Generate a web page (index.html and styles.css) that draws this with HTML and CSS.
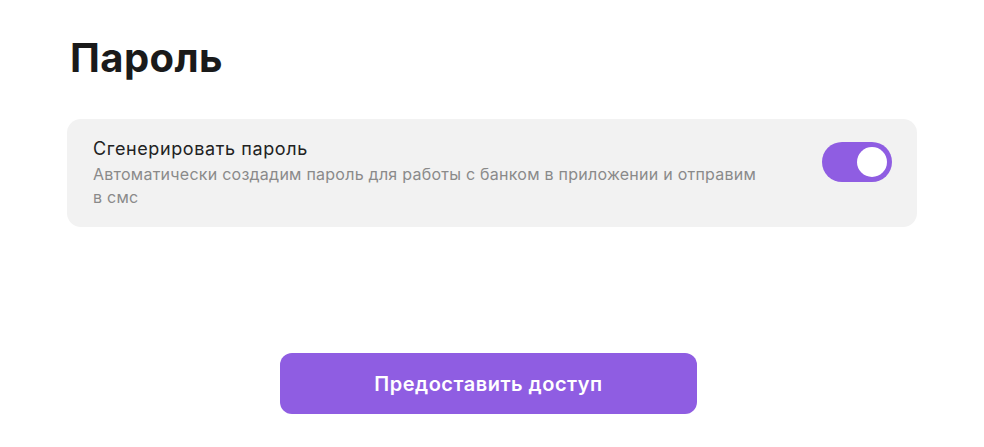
FILE: index.html
```html
<!DOCTYPE html>
<html lang="ru">
<head>
<meta charset="utf-8">
<link rel="stylesheet" href="styles.css">
</head>
<body>
<main class="page">
  <h1 class="title">Пароль</h1>
  <section class="card">
    <div class="card-text">
      <div class="card-label">Сгенерировать пароль</div>
      <div class="card-desc">Автоматически создадим пароль для работы с банком в приложении и отправим в смс</div>
    </div>
    <div class="toggle" role="switch" aria-checked="true"><span class="knob"></span></div>
  </section>
  <div class="actions">
    <button class="btn">Предоставить доступ</button>
  </div>
</main>
</body>
</html>
```
FILE: styles.css
```css
* { box-sizing: border-box; }
html, body { margin: 0; background: #fff; }
body { font-family: Inter, "Noto Sans", sans-serif; color: #1f1f1f; }
.page { padding: 0 67px; width: 984px; }
.title {
  margin: 0;
  padding: 33px 0 0 3px;
  font-size: 40px;
  line-height: 50px;
  font-weight: 700;
  color: #1a1a1a;
  letter-spacing: 0.4px;
}
.card {
  margin-top: 36px;
  height: 108px;
  background: #f2f2f2;
  border-radius: 14px;
  display: flex;
  align-items: flex-start;
  justify-content: space-between;
  padding: 18px 25px 0 26px;
}
.card-text { width: 672px; }
.card-label { font-size: 18px; line-height: 24px; color: #222; letter-spacing: 0.6px; }
.card-desc { font-size: 16px; line-height: 23px; color: #8a8a8a; margin-top: 2px; letter-spacing: 0.25px; }
.toggle {
  margin-top: 5px;
  width: 70px;
  height: 40px;
  border-radius: 20px;
  background: #8f5de2;
  display: flex;
  align-items: center;
  justify-content: flex-end;
  padding-right: 5px;
}
.knob { width: 30px; height: 30px; border-radius: 50%; background: #fff; }
.actions { display: flex; justify-content: center; margin-top: 126px; padding-right: 7px; }
.btn {
  width: 417px;
  height: 61px;
  border: 0;
  border-radius: 12px;
  background: #8f5de2;
  color: #fff;
  font-family: inherit;
  font-size: 20px;
  font-weight: 600;
  letter-spacing: 0.5px;
}
```
